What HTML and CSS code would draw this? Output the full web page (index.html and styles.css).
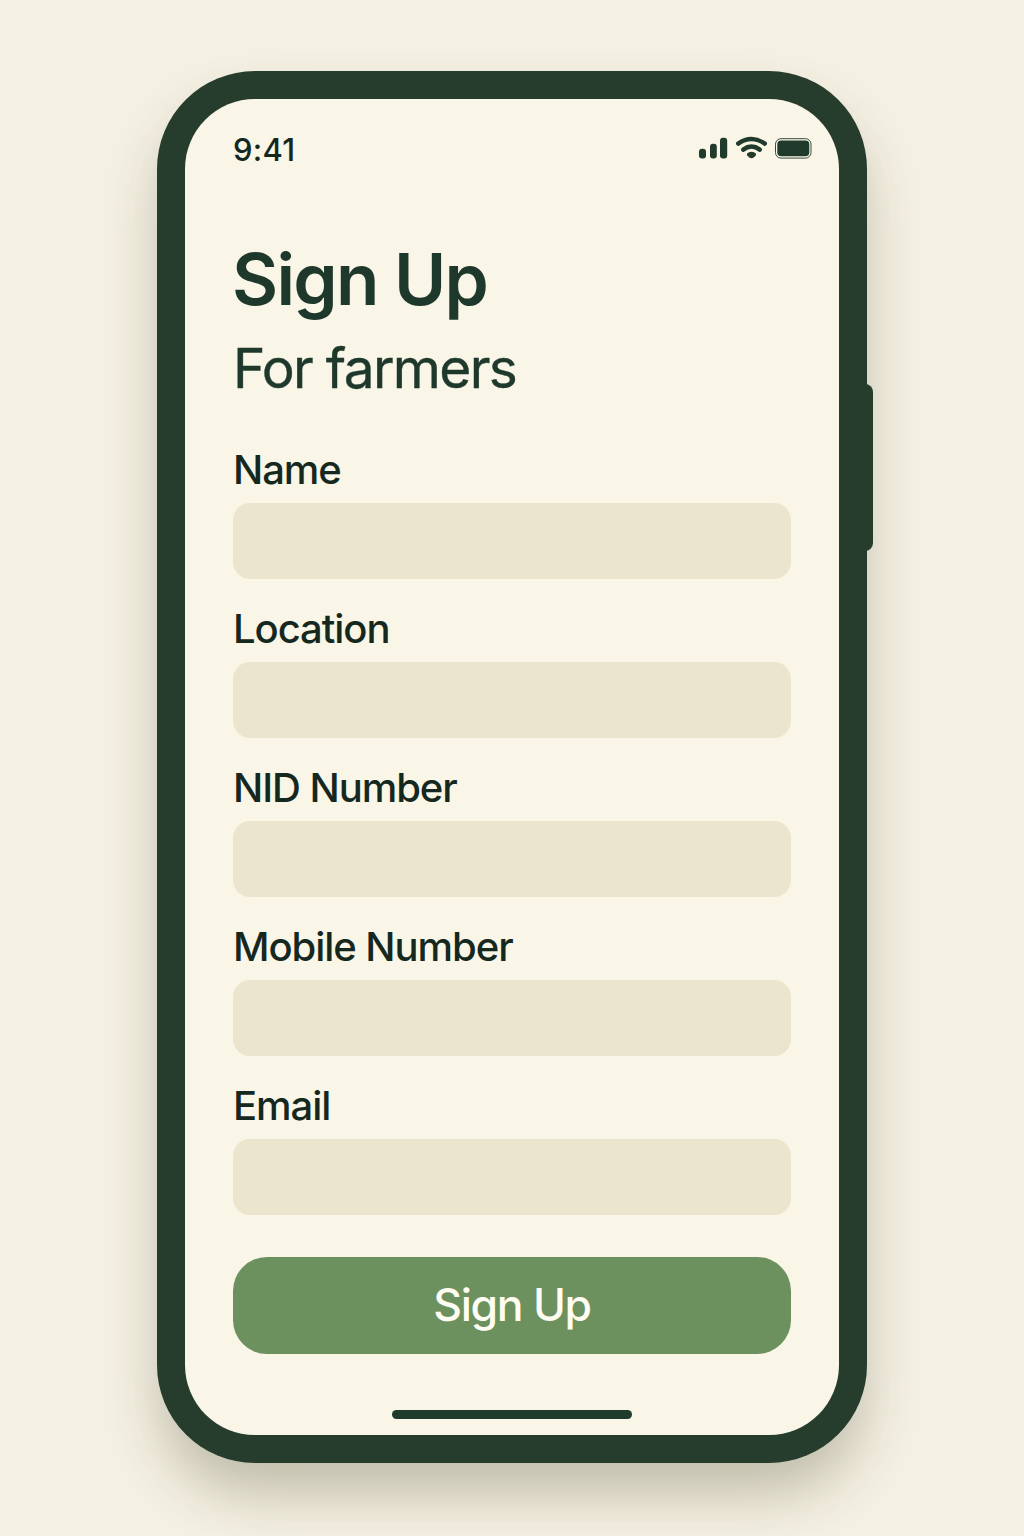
FILE: index.html
```html
<!DOCTYPE html>
<html lang="en">
<head>
<meta charset="utf-8">
<title>Sign Up</title>
<link rel="stylesheet" href="styles.css">
</head>
<body>
<div class="phone">
  <span class="side-button"></span>
  <main class="screen">
    <header class="status">
      <span class="time">9:41</span>
      <svg class="status-icons" width="116" height="26" viewBox="0 0 116 26">
        <g fill="#203a2c">
          <rect x="2" y="12.700" width="7" height="9.700" rx="3"/>
          <rect x="13" y="7.800" width="6.800" height="14.600" rx="3"/>
          <rect x="23" y="1.700" width="7.200" height="20.700" rx="3"/>
          <path d="M51.500 16.600q3-1.700 6 0q2.600 1.500.9 3.300l-1.700 1.600q-2.200 1.400-4.400 0l-1.700-1.600q-1.700-1.800.9-3.300z"/>
        </g>
        <g fill="none" stroke="#203a2c" stroke-width="4.400" stroke-linecap="round">
          <path d="M41.200 7.600q13.300-9.200 26.600 0"/>
          <path d="M46.200 13.600q8.300-6 16.600 0"/>
        </g>
        <rect x="78.500" y="2.700" width="35.500" height="19.400" rx="5.500" fill="none" stroke="#203a2c" stroke-width=".9"/>
        <rect x="80.300" y="4.500" width="32" height="15.800" rx="4" fill="#203a2c"/>
      </svg>
    </header>
    <h1 class="title">Sign Up</h1>
    <p class="subtitle">For farmers</p>
    <form class="form">
      <label class="field"><span class="label">Name</span><input class="input" type="text"></label>
      <label class="field"><span class="label">Location</span><input class="input" type="text"></label>
      <label class="field"><span class="label">NID Number</span><input class="input" type="text"></label>
      <label class="field"><span class="label">Mobile Number</span><input class="input" type="text"></label>
      <label class="field"><span class="label">Email</span><input class="input" type="email"></label>
      <button class="submit" type="button">Sign Up</button>
    </form>
    <div class="home-bar"></div>
  </main>
</div>
</body>
</html>
```
FILE: styles.css
```css
* { box-sizing: border-box; }
body {
  margin: 0;
  height: 1536px;
  padding: 71px 0 0 157px;
  overflow: hidden;
  background: #f4f0e2;
  color: #1f382c;
  font-family: Inter, "Liberation Sans", sans-serif;
}
.phone {
  position: relative;
  width: 710px;
  height: 1391.500px;
  padding: 28px;
  border-radius: 98px;
  background: #263c2d;
  box-shadow: 0 34px 54px -4px rgba(84, 80, 56, .32);
}
.side-button {
  position: absolute;
  left: 700px;
  top: 313px;
  width: 16px;
  height: 167px;
  border-radius: 8px;
  background: #263c2d;
}
.screen {
  display: flex;
  flex-direction: column;
  height: 1335.500px;
  padding: 34px 48px 16px;
  border-radius: 70px;
  background: #f9f5e7;
}
.status {
  display: flex;
  justify-content: space-between;
  height: 34px;
  margin-right: -22px;
}
.time { font-size: 31px; line-height: 34px; font-weight: 500; letter-spacing: .3px; color: #152820; }
.status-icons { margin-top: 3px; }
.title { margin: 67px 0 0 -1px; font-size: 71px; line-height: 90px; font-weight: 600; letter-spacing: -1.700px; }
.subtitle { margin: 10px 0 0; font-size: 55px; line-height: 68px; letter-spacing: -1.650px; -webkit-text-stroke: .4px currentColor; }
.form { display: flex; flex-direction: column; margin-top: 44px; }
.field { display: flex; flex-direction: column; height: 159px; }
.label { height: 57px; font-size: 40px; line-height: 48px; font-weight: 500; letter-spacing: -1.050px; color: #152820; }
.input { width: 100%; height: 76px; border: 0; border-radius: 17px; background: #eae5cc; font: 32px Inter, sans-serif; padding: 0 20px; }
.submit { height: 97px; margin-top: 16px; padding: 0 0 2px; border: 0; border-radius: 34px; background: #6c905e; color: #fffdf2; font: 500 44.500px Inter, sans-serif; letter-spacing: -1.300px; }
.home-bar { align-self: center; width: 240px; height: 8.500px; margin-top: auto; border-radius: 5px; background: #203a2c; }
```
